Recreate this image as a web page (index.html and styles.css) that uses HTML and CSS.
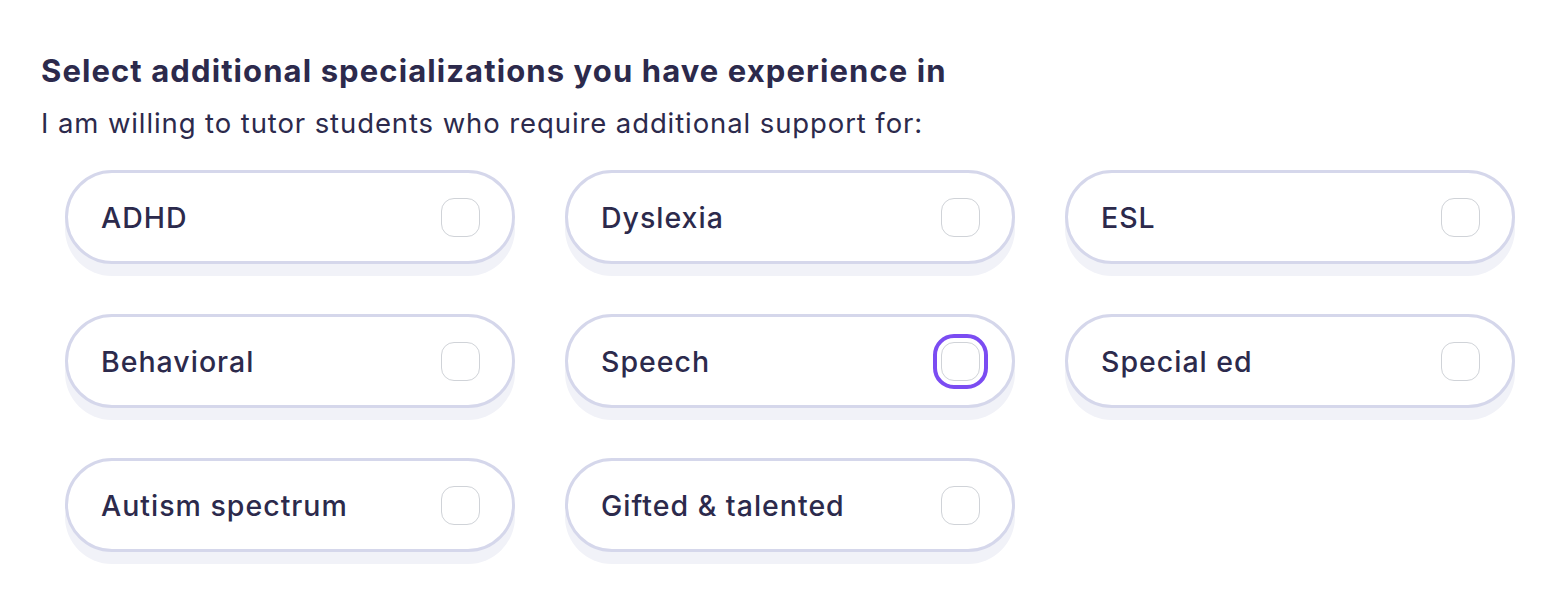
FILE: index.html
```html
<!DOCTYPE html>
<html lang="en">
<head>
    <meta charset="UTF-8">
    <meta name="viewport" content="width=device-width, initial-scale=1.0">
    <title>Specializations</title>
    <link rel="stylesheet" href="styles.css">
</head>
<body>
    <main class="page">
        <h2 class="title">Select additional specializations you have experience in</h2>
        <p class="subtitle">I am willing to tutor students who require additional support for:</p>
        <div class="options">
            <label class="option"><span>ADHD</span><input type="checkbox"></label>
            <label class="option"><span>Dyslexia</span><input type="checkbox"></label>
            <label class="option"><span>ESL</span><input type="checkbox"></label>
            <label class="option"><span>Behavioral</span><input type="checkbox"></label>
            <label class="option"><span>Speech</span><input type="checkbox" class="focused"></label>
            <label class="option"><span>Special ed</span><input type="checkbox"></label>
            <label class="option"><span>Autism spectrum</span><input type="checkbox"></label>
            <label class="option"><span>Gifted &amp; talented</span><input type="checkbox"></label>
        </div>
    </main>
</body>
</html>
```

FILE: styles.css
```css
body {
    margin: 0;
    background: #ffffff;
    font-family: Inter, "Open Sans", sans-serif;
    color: #2c2a4c;
}
.page {
    padding: 51px 41px 60px 41px;
}
.title {
    margin: 0;
    font-size: 31px;
    line-height: 40px;
    font-weight: 700;
    letter-spacing: 1.1px;
    white-space: nowrap;
}
.subtitle {
    margin: 14px 0 0 0;
    font-size: 27.5px;
    line-height: 36px;
    font-weight: 400;
    letter-spacing: 0.9px;
    white-space: nowrap;
}
.options {
    display: grid;
    grid-template-columns: repeat(3, 450px);
    column-gap: 50px;
    row-gap: 50px;
    margin-top: 29px;
    padding-left: 24px;
}
.option {
    box-sizing: border-box;
    height: 94px;
    display: flex;
    align-items: center;
    justify-content: space-between;
    padding: 0 32px 0 33px;
    border: 3px solid #d5d7eb;
    border-radius: 47px;
    background: #ffffff;
    box-shadow: 0 12px 0 #f1f2f8;
    font-size: 28.5px;
    font-weight: 500;
    letter-spacing: 1px;
    cursor: pointer;
}
.option input {
    appearance: none;
    margin: 0;
    width: 39px;
    height: 39px;
    border: 1.5px solid #d0d3d8;
    border-radius: 13px;
    background: #ffffff;
}
.option input.focused {
    outline: 4px solid #7b4cf2;
    outline-offset: 4px;
}
```
